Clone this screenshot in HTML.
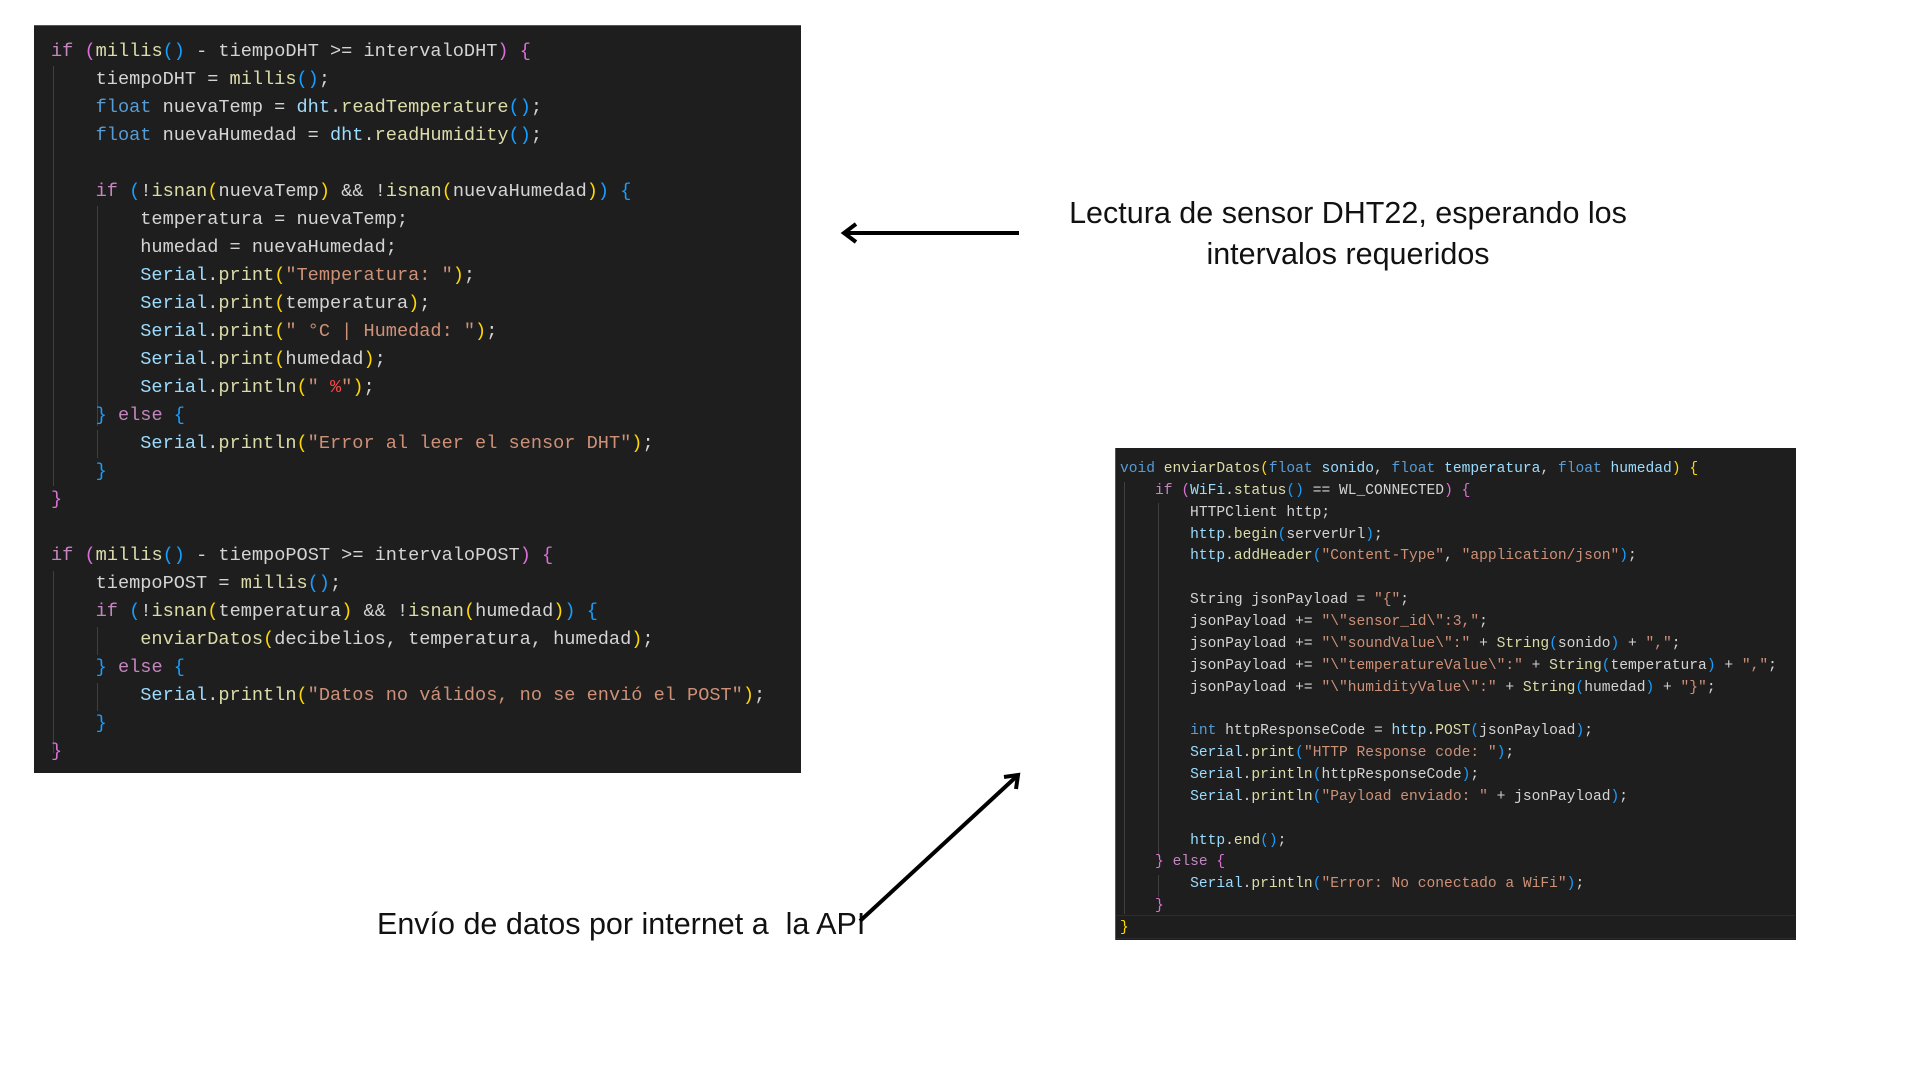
<!DOCTYPE html>
<html><head><meta charset="utf-8"><style>
html,body{margin:0;padding:0;background:#fff;width:1920px;height:1080px;overflow:hidden;position:relative}
.box{position:absolute;background:#1e1e1e}
.code{position:absolute;font-family:"Liberation Mono",monospace;color:#d4d4d4}
.code div{height:var(--lh);white-space:pre}
.k{color:#c586c0}.t{color:#569cd6}.f{color:#dcdcaa}.v{color:#9cdcfe}.s{color:#ce9178}
.y{color:#ffd700}.m{color:#da70d6}.b{color:#179fff}.r{color:#f44747}
.g{position:absolute;width:1px;background:#404040}
.ann{position:absolute;font-family:"Liberation Sans",sans-serif;color:#111;font-size:30.5px;letter-spacing:0}
</style></head><body>
<div class="box" style="left:34px;top:25px;width:767px;height:747px;border-top:1px solid #555"></div>
<div class="g" style="left:53px;top:66px;height:420px"></div>
<div class="g" style="left:97px;top:206px;height:220px"></div>
<div class="g" style="left:97px;top:430px;height:28px"></div>
<div class="g" style="left:53px;top:571px;height:182px"></div>
<div class="g" style="left:97px;top:627px;height:28px"></div>
<div class="g" style="left:97px;top:683px;height:28px"></div>
<div class="code" style="left:51px;top:38px;font-size:18.6px;line-height:28px;--lh:28px"><div><span class="k">if</span> <span class="m">(</span><span class="f">millis</span><span class="b">()</span> - tiempoDHT &gt;= intervaloDHT<span class="m">)</span> <span class="m">{</span></div><div>    tiempoDHT = <span class="f">millis</span><span class="b">()</span>;</div><div>    <span class="t">float</span> nuevaTemp = <span class="v">dht</span>.<span class="f">readTemperature</span><span class="b">()</span>;</div><div>    <span class="t">float</span> nuevaHumedad = <span class="v">dht</span>.<span class="f">readHumidity</span><span class="b">()</span>;</div><div> </div><div>    <span class="k">if</span> <span class="b">(</span>!<span class="f">isnan</span><span class="y">(</span>nuevaTemp<span class="y">)</span> &amp;&amp; !<span class="f">isnan</span><span class="y">(</span>nuevaHumedad<span class="y">)</span><span class="b">)</span> <span class="b">{</span></div><div>        temperatura = nuevaTemp;</div><div>        humedad = nuevaHumedad;</div><div>        <span class="v">Serial</span>.<span class="f">print</span><span class="y">(</span><span class="s">"Temperatura: "</span><span class="y">)</span>;</div><div>        <span class="v">Serial</span>.<span class="f">print</span><span class="y">(</span>temperatura<span class="y">)</span>;</div><div>        <span class="v">Serial</span>.<span class="f">print</span><span class="y">(</span><span class="s">" °C | Humedad: "</span><span class="y">)</span>;</div><div>        <span class="v">Serial</span>.<span class="f">print</span><span class="y">(</span>humedad<span class="y">)</span>;</div><div>        <span class="v">Serial</span>.<span class="f">println</span><span class="y">(</span><span class="s">" <span class="r">%</span>"</span><span class="y">)</span>;</div><div>    <span class="b">}</span> <span class="k">else</span> <span class="b">{</span></div><div>        <span class="v">Serial</span>.<span class="f">println</span><span class="y">(</span><span class="s">"Error al leer el sensor DHT"</span><span class="y">)</span>;</div><div>    <span class="b">}</span></div><div><span class="m">}</span></div><div> </div><div><span class="k">if</span> <span class="m">(</span><span class="f">millis</span><span class="b">()</span> - tiempoPOST &gt;= intervaloPOST<span class="m">)</span> <span class="m">{</span></div><div>    tiempoPOST = <span class="f">millis</span><span class="b">()</span>;</div><div>    <span class="k">if</span> <span class="b">(</span>!<span class="f">isnan</span><span class="y">(</span>temperatura<span class="y">)</span> &amp;&amp; !<span class="f">isnan</span><span class="y">(</span>humedad<span class="y">)</span><span class="b">)</span> <span class="b">{</span></div><div>        <span class="f">enviarDatos</span><span class="y">(</span>decibelios, temperatura, humedad<span class="y">)</span>;</div><div>    <span class="b">}</span> <span class="k">else</span> <span class="b">{</span></div><div>        <span class="v">Serial</span>.<span class="f">println</span><span class="y">(</span><span class="s">"Datos no válidos, no se envió el POST"</span><span class="y">)</span>;</div><div>    <span class="b">}</span></div><div><span class="m">}</span></div></div>

<div class="box" style="left:1115px;top:448px;width:680px;height:492px;border-left:1px solid #555"></div>
<div style="position:absolute;left:1116px;top:915px;width:679px;height:22px;border-top:1px solid #2c2c2c;border-bottom:1px solid #2c2c2c"></div>
<div class="g" style="left:1124px;top:482px;height:432px"></div>
<div class="g" style="left:1158px;top:503px;height:354px"></div>
<div class="g" style="left:1158px;top:875px;height:22px"></div>
<div class="code" style="left:1120px;top:459px;font-size:14.6px;line-height:21.86px;--lh:21.86px"><div><span class="t">void</span> <span class="f">enviarDatos</span><span class="y">(</span><span class="t">float</span> <span class="v">sonido</span>, <span class="t">float</span> <span class="v">temperatura</span>, <span class="t">float</span> <span class="v">humedad</span><span class="y">)</span> <span class="y">{</span></div><div>    <span class="k">if</span> <span class="m">(</span><span class="v">WiFi</span>.<span class="f">status</span><span class="b">()</span> == WL_CONNECTED<span class="m">)</span> <span class="m">{</span></div><div>        HTTPClient http;</div><div>        <span class="v">http</span>.<span class="f">begin</span><span class="b">(</span>serverUrl<span class="b">)</span>;</div><div>        <span class="v">http</span>.<span class="f">addHeader</span><span class="b">(</span><span class="s">"Content-Type"</span>, <span class="s">"application/json"</span><span class="b">)</span>;</div><div> </div><div>        String jsonPayload = <span class="s">"{"</span>;</div><div>        jsonPayload += <span class="s">"\"sensor_id\":3,"</span>;</div><div>        jsonPayload += <span class="s">"\"soundValue\":"</span> + <span class="f">String</span><span class="b">(</span>sonido<span class="b">)</span> + <span class="s">","</span>;</div><div>        jsonPayload += <span class="s">"\"temperatureValue\":"</span> + <span class="f">String</span><span class="b">(</span>temperatura<span class="b">)</span> + <span class="s">","</span>;</div><div>        jsonPayload += <span class="s">"\"humidityValue\":"</span> + <span class="f">String</span><span class="b">(</span>humedad<span class="b">)</span> + <span class="s">"}"</span>;</div><div> </div><div>        <span class="t">int</span> httpResponseCode = <span class="v">http</span>.<span class="f">POST</span><span class="b">(</span>jsonPayload<span class="b">)</span>;</div><div>        <span class="v">Serial</span>.<span class="f">print</span><span class="b">(</span><span class="s">"HTTP Response code: "</span><span class="b">)</span>;</div><div>        <span class="v">Serial</span>.<span class="f">println</span><span class="b">(</span>httpResponseCode<span class="b">)</span>;</div><div>        <span class="v">Serial</span>.<span class="f">println</span><span class="b">(</span><span class="s">"Payload enviado: "</span> + jsonPayload<span class="b">)</span>;</div><div> </div><div>        <span class="v">http</span>.<span class="f">end</span><span class="b">()</span>;</div><div>    <span class="m">}</span> <span class="k">else</span> <span class="m">{</span></div><div>        <span class="v">Serial</span>.<span class="f">println</span><span class="b">(</span><span class="s">"Error: No conectado a WiFi"</span><span class="b">)</span>;</div><div>    <span class="m">}</span></div><div><span class="y">}</span></div></div>

<div class="ann" style="left:1048px;top:193px;width:600px;text-align:center;line-height:41px">Lectura de sensor DHT22, esperando los<br>intervalos requeridos</div>
<div class="ann" style="left:377px;top:907px;white-space:pre">Envío de datos por internet a  la API</div>

<svg style="position:absolute;left:0;top:0" width="1920" height="1080">
<line x1="1019" y1="233" x2="846" y2="233" stroke="#000" stroke-width="4"/>
<polyline points="856,224 844,233 856,242" fill="none" stroke="#000" stroke-width="4"/>
<line x1="860" y1="921" x2="1017" y2="776" stroke="#000" stroke-width="4"/>
<polyline points="1004,777 1018,775 1016,789" fill="none" stroke="#000" stroke-width="4"/>
</svg>
</body></html>
